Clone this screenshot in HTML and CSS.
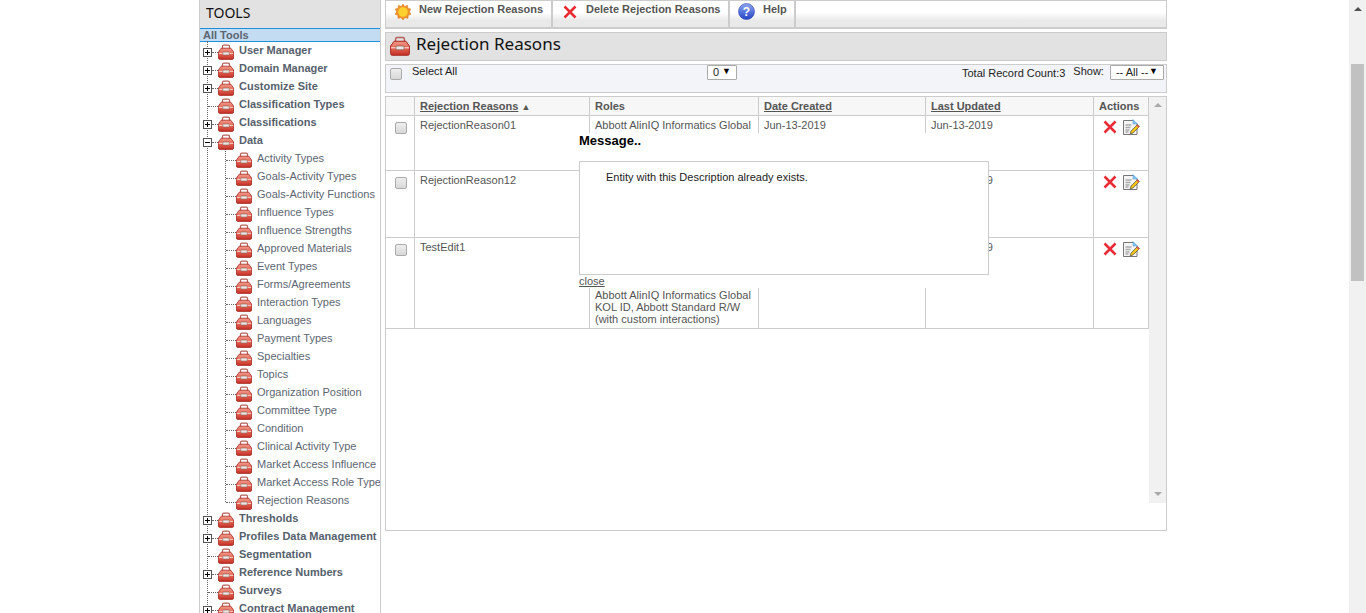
FILE: index.html
```html
<!DOCTYPE html>
<html lang="en">
<head>
    <meta charset="UTF-8">
    <title>Rejection Reasons</title>
    <link rel="stylesheet" href="styles.css">
</head>
<body>
    <svg class="defs" width="0" height="0">
        <defs>
            <linearGradient id="box-red" x1="0" y1="0" x2="0" y2="1">
                <stop offset="0" stop-color="#f29a8a"/>
                <stop offset="0.45" stop-color="#e66a58"/>
                <stop offset="1" stop-color="#c42e26"/>
            </linearGradient>
            <linearGradient id="help-blue" x1="0" y1="0" x2="0" y2="1">
                <stop offset="0" stop-color="#8fa9f0"/>
                <stop offset="1" stop-color="#2443c8"/>
            </linearGradient>
            <symbol id="toolbox" viewBox="0 0 16 16">
                <path d="M4.500 5V2.500C4.500 1.700 5 1.200 5.800 1.200h4.400c.8 0 1.300.5 1.300 1.300V5" fill="none" stroke="#b8605a" stroke-width="1.200"/>
                <path d="M3.200 4.200h9.600L15.500 8v6.200c0 .7-.5 1.200-1.200 1.200H1.700c-.7 0-1.200-.5-1.200-1.200V8z" fill="url(#box-red)" stroke="#a62a22" stroke-width=".8"/>
                <path d="M.8 9.400h14.400" stroke="#f8d0c8" stroke-width="1"/>
                <rect x="4.800" y="8" width="6.400" height="3" rx=".6" fill="#ece8e6" stroke="#8a5a55" stroke-width=".6"/>
            </symbol>
            <symbol id="red-x" viewBox="0 0 14 14">
                <path d="M1.500 1.500l11 11M12.500 1.500l-11 11" stroke="#ea2b35" stroke-width="2.500" fill="none"/>
            </symbol>
            <symbol id="edit-doc" viewBox="0 0 17 17">
                <path d="M.5 1.500h10l3.500 3.500v10.500H.5z" fill="#f4f4f4" stroke="#777" stroke-width="1"/>
                <path d="M10 .5l4.500 4.500H10z" fill="#8cc8f0" stroke="#4b9ad8" stroke-width=".5"/>
                <path d="M2.500 6h6M2.500 8.500h5M2.500 11h4M2.500 13h3" stroke="#aaa" stroke-width="1.300"/>
                <path d="M14.500 5.500l2 2-6.500 6.500-2.800.8.800-2.800z" fill="#f5c518" stroke="#333" stroke-width=".6"/>
                <path d="M14.500 5.500l2 2-1.200 1.200-2-2z" fill="#e0605a"/>
            </symbol>
        </defs>
    </svg>

    <div class="page">
        <aside class="sidebar">
            <div class="side-title">TOOLS</div>
            <div class="side-sub">All Tools</div>
            <ul class="tree">
                <li class="node top"><span class="toggle plus"></span><span class="dash"></span><svg class="ico"><use href="#toolbox"/></svg><span class="lbl">User Manager</span></li>
                <li class="node top"><span class="toggle plus"></span><span class="dash"></span><svg class="ico"><use href="#toolbox"/></svg><span class="lbl">Domain Manager</span></li>
                <li class="node top"><span class="toggle plus"></span><span class="dash"></span><svg class="ico"><use href="#toolbox"/></svg><span class="lbl">Customize Site</span></li>
                <li class="node top"><span class="dash long"></span><svg class="ico"><use href="#toolbox"/></svg><span class="lbl">Classification Types</span></li>
                <li class="node top"><span class="toggle plus"></span><span class="dash"></span><svg class="ico"><use href="#toolbox"/></svg><span class="lbl">Classifications</span></li>
                <li class="node top"><span class="toggle"></span><span class="dash"></span><svg class="ico"><use href="#toolbox"/></svg><span class="lbl">Data</span></li>
                <li>
                    <ul class="subtree">
                        <li class="node"><span class="dash long"></span><svg class="ico"><use href="#toolbox"/></svg><span class="lbl">Activity Types</span></li>
                        <li class="node"><span class="dash long"></span><svg class="ico"><use href="#toolbox"/></svg><span class="lbl">Goals-Activity Types</span></li>
                        <li class="node"><span class="dash long"></span><svg class="ico"><use href="#toolbox"/></svg><span class="lbl">Goals-Activity Functions</span></li>
                        <li class="node"><span class="dash long"></span><svg class="ico"><use href="#toolbox"/></svg><span class="lbl">Influence Types</span></li>
                        <li class="node"><span class="dash long"></span><svg class="ico"><use href="#toolbox"/></svg><span class="lbl">Influence Strengths</span></li>
                        <li class="node"><span class="dash long"></span><svg class="ico"><use href="#toolbox"/></svg><span class="lbl">Approved Materials</span></li>
                        <li class="node"><span class="dash long"></span><svg class="ico"><use href="#toolbox"/></svg><span class="lbl">Event Types</span></li>
                        <li class="node"><span class="dash long"></span><svg class="ico"><use href="#toolbox"/></svg><span class="lbl">Forms/Agreements</span></li>
                        <li class="node"><span class="dash long"></span><svg class="ico"><use href="#toolbox"/></svg><span class="lbl">Interaction Types</span></li>
                        <li class="node"><span class="dash long"></span><svg class="ico"><use href="#toolbox"/></svg><span class="lbl">Languages</span></li>
                        <li class="node"><span class="dash long"></span><svg class="ico"><use href="#toolbox"/></svg><span class="lbl">Payment Types</span></li>
                        <li class="node"><span class="dash long"></span><svg class="ico"><use href="#toolbox"/></svg><span class="lbl">Specialties</span></li>
                        <li class="node"><span class="dash long"></span><svg class="ico"><use href="#toolbox"/></svg><span class="lbl">Topics</span></li>
                        <li class="node"><span class="dash long"></span><svg class="ico"><use href="#toolbox"/></svg><span class="lbl">Organization Position</span></li>
                        <li class="node"><span class="dash long"></span><svg class="ico"><use href="#toolbox"/></svg><span class="lbl">Committee Type</span></li>
                        <li class="node"><span class="dash long"></span><svg class="ico"><use href="#toolbox"/></svg><span class="lbl">Condition</span></li>
                        <li class="node"><span class="dash long"></span><svg class="ico"><use href="#toolbox"/></svg><span class="lbl">Clinical Activity Type</span></li>
                        <li class="node"><span class="dash long"></span><svg class="ico"><use href="#toolbox"/></svg><span class="lbl">Market Access Influence</span></li>
                        <li class="node"><span class="dash long"></span><svg class="ico"><use href="#toolbox"/></svg><span class="lbl">Market Access Role Type</span></li>
                        <li class="node"><span class="dash long"></span><svg class="ico"><use href="#toolbox"/></svg><span class="lbl">Rejection Reasons</span></li>
                    </ul>
                </li>
                <li class="node top"><span class="toggle plus"></span><span class="dash"></span><svg class="ico"><use href="#toolbox"/></svg><span class="lbl">Thresholds</span></li>
                <li class="node top"><span class="toggle plus"></span><span class="dash"></span><svg class="ico"><use href="#toolbox"/></svg><span class="lbl">Profiles Data Management</span></li>
                <li class="node top"><span class="dash long"></span><svg class="ico"><use href="#toolbox"/></svg><span class="lbl">Segmentation</span></li>
                <li class="node top"><span class="toggle plus"></span><span class="dash"></span><svg class="ico"><use href="#toolbox"/></svg><span class="lbl">Reference Numbers</span></li>
                <li class="node top"><span class="dash long"></span><svg class="ico"><use href="#toolbox"/></svg><span class="lbl">Surveys</span></li>
                <li class="node top"><span class="toggle plus"></span><span class="dash"></span><svg class="ico"><use href="#toolbox"/></svg><span class="lbl">Contract Management</span></li>
            </ul>
        </aside>

        <main class="main">
            <div class="toolbar">
                <a class="tool tool-new">
                    <svg class="tool-ico" viewBox="0 0 16 16">
                        <polygon points="8,0 9.800,2.500 12.600,1.300 12.900,4.300 15.800,5 14.300,7.800 16,10.200 13.200,11.300 13,14.400 10,13.600 8,16 6,13.600 3,14.400 2.800,11.300 0,10.200 1.700,7.800 .2,5 3.100,4.300 3.400,1.300 6.200,2.500" fill="#f0912a" stroke="#d9781c" stroke-width=".5"/>
                        <circle cx="8" cy="8" r="4.800" fill="#fbd02f"/>
                    </svg>
                    New Rejection Reasons
                </a>
                <a class="tool tool-del">
                    <svg class="tool-ico"><use href="#red-x"/></svg>
                    Delete Rejection Reasons
                </a>
                <a class="tool tool-help">
                    <svg class="tool-ico" viewBox="0 0 17 17">
                        <circle cx="8.500" cy="8.500" r="8" fill="url(#help-blue)" stroke="#2b3fa8" stroke-width=".6"/>
                        <text x="8.500" y="13" text-anchor="middle" class="help-q">?</text>
                    </svg>
                    Help
                </a>
            </div>

            <div class="titlebar">
                <svg class="title-ico"><use href="#toolbox"/></svg>
                <h1>Rejection Reasons</h1>
            </div>

            <div class="filterbar">
                <input type="checkbox" class="check">
                <span class="select-all">Select All</span>
                <span class="dropdown dd-page">0 <b>&#9660;</b></span>
                <span class="count">Total Record Count:3</span>
                <span class="show">Show:</span>
                <span class="dropdown dd-show">-- All -- <b>&#9660;</b></span>
            </div>

            <div class="listing">
                <table class="grid">
                    <colgroup>
                        <col class="c-check"><col class="c-name"><col class="c-roles"><col class="c-date"><col class="c-date2"><col class="c-act">
                    </colgroup>
                    <thead>
                        <tr>
                            <th></th>
                            <th><a>Rejection Reasons</a> <span class="sort">&#9650;</span></th>
                            <th>Roles</th>
                            <th><a>Date Created</a></th>
                            <th><a>Last Updated</a></th>
                            <th>Actions</th>
                        </tr>
                    </thead>
                    <tbody>
                        <tr class="row-a">
                            <td class="td-check"><input type="checkbox" class="check"></td>
                            <td>RejectionReason01</td>
                            <td>Abbott AlinIQ Informatics Global</td>
                            <td>Jun-13-2019</td>
                            <td>Jun-13-2019</td>
                            <td class="td-act"><svg class="act-x"><use href="#red-x"/></svg><svg class="act-edit"><use href="#edit-doc"/></svg></td>
                        </tr>
                        <tr class="row-b">
                            <td class="td-check"><input type="checkbox" class="check"></td>
                            <td>RejectionReason12</td>
                            <td></td>
                            <td></td>
                            <td>Jun-13-2019</td>
                            <td class="td-act"><svg class="act-x"><use href="#red-x"/></svg><svg class="act-edit"><use href="#edit-doc"/></svg></td>
                        </tr>
                        <tr class="row-c">
                            <td class="td-check"><input type="checkbox" class="check"></td>
                            <td>TestEdit1</td>
                            <td class="td-bottom">Abbott AlinIQ Informatics Global KOL ID, Abbott Standard R/W (with custom interactions)</td>
                            <td></td>
                            <td>Jun-13-2019</td>
                            <td class="td-act"><svg class="act-x"><use href="#red-x"/></svg><svg class="act-edit"><use href="#edit-doc"/></svg></td>
                        </tr>
                    </tbody>
                </table>
                <div class="mini-scroll">
                    <span class="arrow-up"></span>
                    <span class="arrow-down"></span>
                </div>

                <div class="message">
                    <div class="msg-title">Message..</div>
                    <div class="msg-box">Entity with this Description already exists.</div>
                    <a class="msg-close">close</a>
                </div>
            </div>
        </main>

        <div class="page-scroll">
            <span class="page-up"></span>
            <span class="page-thumb"></span>
        </div>
    </div>
</body>
</html>
```

FILE: styles.css
```css
* {
    box-sizing: border-box;
}
html, body {
    margin: 0;
    height: 613px;
    overflow: hidden;
    background-color: #fff;
}
body {
    font-family: "Liberation Sans", Arial, sans-serif;
    font-size: 11px;
    color: #555;
}
.defs {
    display: block;
    height: 0;
}
ul {
    list-style: none;
    margin: 0;
    padding: 0;
}
.page {
    display: flex;
    height: 613px;
    padding-left: 199px;
    overflow: hidden;
}

/* left tree */
.sidebar {
    width: 182px;
    flex: none;
    border-left: 1px solid #ccc;
    border-right: 1px solid #ccc;
    overflow: hidden;
}
.side-title {
    height: 28px;
    padding: 5px 0 0 6px;
    background-color: #e2e2e2;
    font-family: "Noto Sans", sans-serif;
    font-size: 14px;
    line-height: 16px;
    color: #111;
}
.side-sub {
    height: 14px;
    border-top: 1px solid #1c90e0;
    border-bottom: 1px solid #1c90e0;
    padding-left: 3px;
    background-color: #c3dcf1;
    font-weight: bold;
    line-height: 13px;
    color: #5b6470;
}
.tree {
    margin: -1px 0 0 7px;
    border-left: 1px dotted #666;
}
.node {
    display: flex;
    height: 18px;
    line-height: 18px;
    white-space: nowrap;
}
.toggle {
    width: 9px;
    height: 9px;
    margin: 7px 0 0 -5px;
    flex: none;
    border: 1px solid #555;
    background: #fff linear-gradient(#000, #000) center / 5px 1px no-repeat;
}
.toggle.plus {
    background-image: linear-gradient(#000, #000), linear-gradient(#000, #000);
    background-size: 5px 1px, 1px 5px;
}
.dash {
    width: 6px;
    height: 1px;
    margin-top: 11px;
    flex: none;
    border-top: 1px dotted #666;
}
.dash.long {
    width: 10px;
}
.ico {
    width: 16px;
    height: 16px;
    margin-top: 3px;
    flex: none;
}
.lbl {
    margin-left: 5px;
}
.top .lbl {
    font-weight: bold;
    color: #565f6c;
}
.subtree {
    height: 353px;
    margin: 0 0 7px 17px;
    border-left: 1px dotted #666;
}
.subtree .lbl {
    color: #5d6672;
}

/* right side */
.main {
    width: 782px;
    flex: none;
    margin-left: 4px;
}
.toolbar {
    display: flex;
    height: 29px;
    border: 1px solid #ccc;
    border-bottom: 2px solid #ccc;
    background: linear-gradient(#fff 0, #fff 45%, #e9e9e9 75%, #e9e9e9 100%);
    font-weight: bold;
}
.tool {
    display: flex;
    gap: 8px;
    height: 26px;
    padding: 0 0 0 9px;
    border-right: 2px solid #ccc;
    line-height: 16px;
    white-space: nowrap;
    color: #555;
}
.tool-new {
    width: 167px;
}
.tool-del {
    width: 177px;
    gap: 9px;
}
.tool-help {
    width: 66px;
    padding-left: 8px;
}
.tool-ico {
    width: 16px;
    height: 16px;
    margin-top: 3px;
    flex: none;
}
.tool-del .tool-ico {
    width: 14px;
    height: 14px;
    margin: 4px 0 0 1px;
}
.tool-help .tool-ico {
    width: 17px;
    height: 17px;
    margin-top: 2px;
}
.help-q {
    font: bold 12px "Liberation Sans", sans-serif;
    fill: #fff;
}
.titlebar {
    display: flex;
    height: 29px;
    margin-top: 3px;
    padding-left: 4px;
    border: 1px solid #ccc;
    background-color: #e2e2e2;
}
.title-ico {
    width: 20px;
    height: 20px;
    margin-top: 3px;
    flex: none;
}
.titlebar h1 {
    margin: 0 0 0 6px;
    font-family: "Noto Sans", sans-serif;
    font-size: 17px;
    font-weight: normal;
    line-height: 22px;
    color: #111;
}
.filterbar {
    display: flex;
    height: 29px;
    margin-top: 3px;
    padding-left: 4px;
    border: 1px solid #ccc;
    background-color: #f2f4f9;
    color: #222;
}
.check {
    appearance: none;
    width: 12px;
    height: 12px;
    margin: 0;
    border: 1px solid #aaa;
    border-radius: 2px;
    background: linear-gradient(#eee, #d8d8d8);
}
.filterbar .check {
    margin-top: 3px;
    flex: none;
}
.select-all {
    width: 295px;
    margin-left: 10px;
    line-height: 13px;
}
.dropdown {
    display: flex;
    justify-content: space-between;
    height: 15px;
    border: 1px solid #aaa;
    border-radius: 1px;
    background-color: #fff;
    padding: 0 5px;
    line-height: 13px;
    white-space: nowrap;
}
.dropdown b {
    font-size: 9px;
    font-weight: normal;
    line-height: 11px;
    color: #000;
}
.dd-page {
    width: 30px;
}
.count {
    margin-left: 225px;
    padding-top: 2px;
    line-height: 13px;
}
.show {
    margin-left: 8px;
    line-height: 13px;
}
.dd-show {
    width: 54px;
    margin-left: 6px;
}

.listing {
    position: relative;
    display: flex;
    align-items: flex-start;
    height: 435px;
    margin-top: 3px;
    border: 1px solid #ccc;
}
.grid {
    width: 763px;
    flex: none;
    table-layout: fixed;
    border-collapse: separate;
    border-spacing: 0;
    line-height: 12px;
}
.c-check { width: 29px; }
.c-name { width: 175px; }
.c-roles { width: 169px; }
.c-date { width: 167px; }
.c-date2 { width: 168px; }
.c-act { width: 55px; }
.grid th, .grid td {
    padding: 3px 5px;
    border-right: 1px solid #ccc;
    border-bottom: 1px solid #ccc;
    text-align: left;
    vertical-align: top;
}
.grid th {
    height: 19px;
    background-color: #f7f7f7;
    font-weight: bold;
}
.grid th a {
    text-decoration: underline;
}
.sort {
    font-size: 9px;
    font-weight: normal;
    line-height: 0;
}
.row-a td { height: 55px; }
.row-b td { height: 67px; }
.row-c td { height: 91px; }
.grid .td-bottom {
    vertical-align: bottom;
}
.grid .td-check {
    padding: 6px 0 0 9px;
}
.grid .td-act {
    padding: 3px 0 0 9px;
    white-space: nowrap;
}
.act-x {
    width: 14px;
    height: 14px;
    margin-top: 1px;
    vertical-align: top;
}
.act-edit {
    width: 17px;
    height: 17px;
    margin-left: 6px;
    vertical-align: top;
}

.mini-scroll {
    display: flex;
    flex-direction: column;
    justify-content: space-between;
    align-items: center;
    width: 17px;
    height: 406px;
    padding: 6px 0 7px;
    background-color: #f1f1f1;
}
.arrow-up {
    border: 4px solid transparent;
    border-top: 0;
    border-bottom: 4px solid #a9a9a9;
}
.arrow-down {
    border: 4px solid transparent;
    border-bottom: 0;
    border-top: 4px solid #a9a9a9;
}

/* message popup sits over the grid */
.message {
    position: absolute;
    left: 193px;
    top: 36px;
    width: 410px;
    height: 155px;
    background-color: #fff;
}
.msg-title {
    height: 28px;
    font-size: 13px;
    font-weight: bold;
    line-height: 16px;
    color: #000;
}
.msg-box {
    height: 114px;
    padding: 9px 0 0 26px;
    border: 1px solid #ccc;
    line-height: 13px;
    color: #222;
}
.msg-close {
    display: block;
    line-height: 12px;
    text-decoration: underline;
}

.page-scroll {
    position: relative;
    width: 17px;
    margin-left: auto;
    flex: none;
    background-color: #f1f1f1;
}
.page-up {
    position: absolute;
    left: 5px;
    top: 7px;
    border: 4px solid transparent;
    border-top: 0;
    border-bottom: 4px solid #505050;
}
.page-thumb {
    position: absolute;
    left: 2px;
    top: 64px;
    width: 13px;
    height: 217px;
    background-color: #c1c1c1;
}
```
